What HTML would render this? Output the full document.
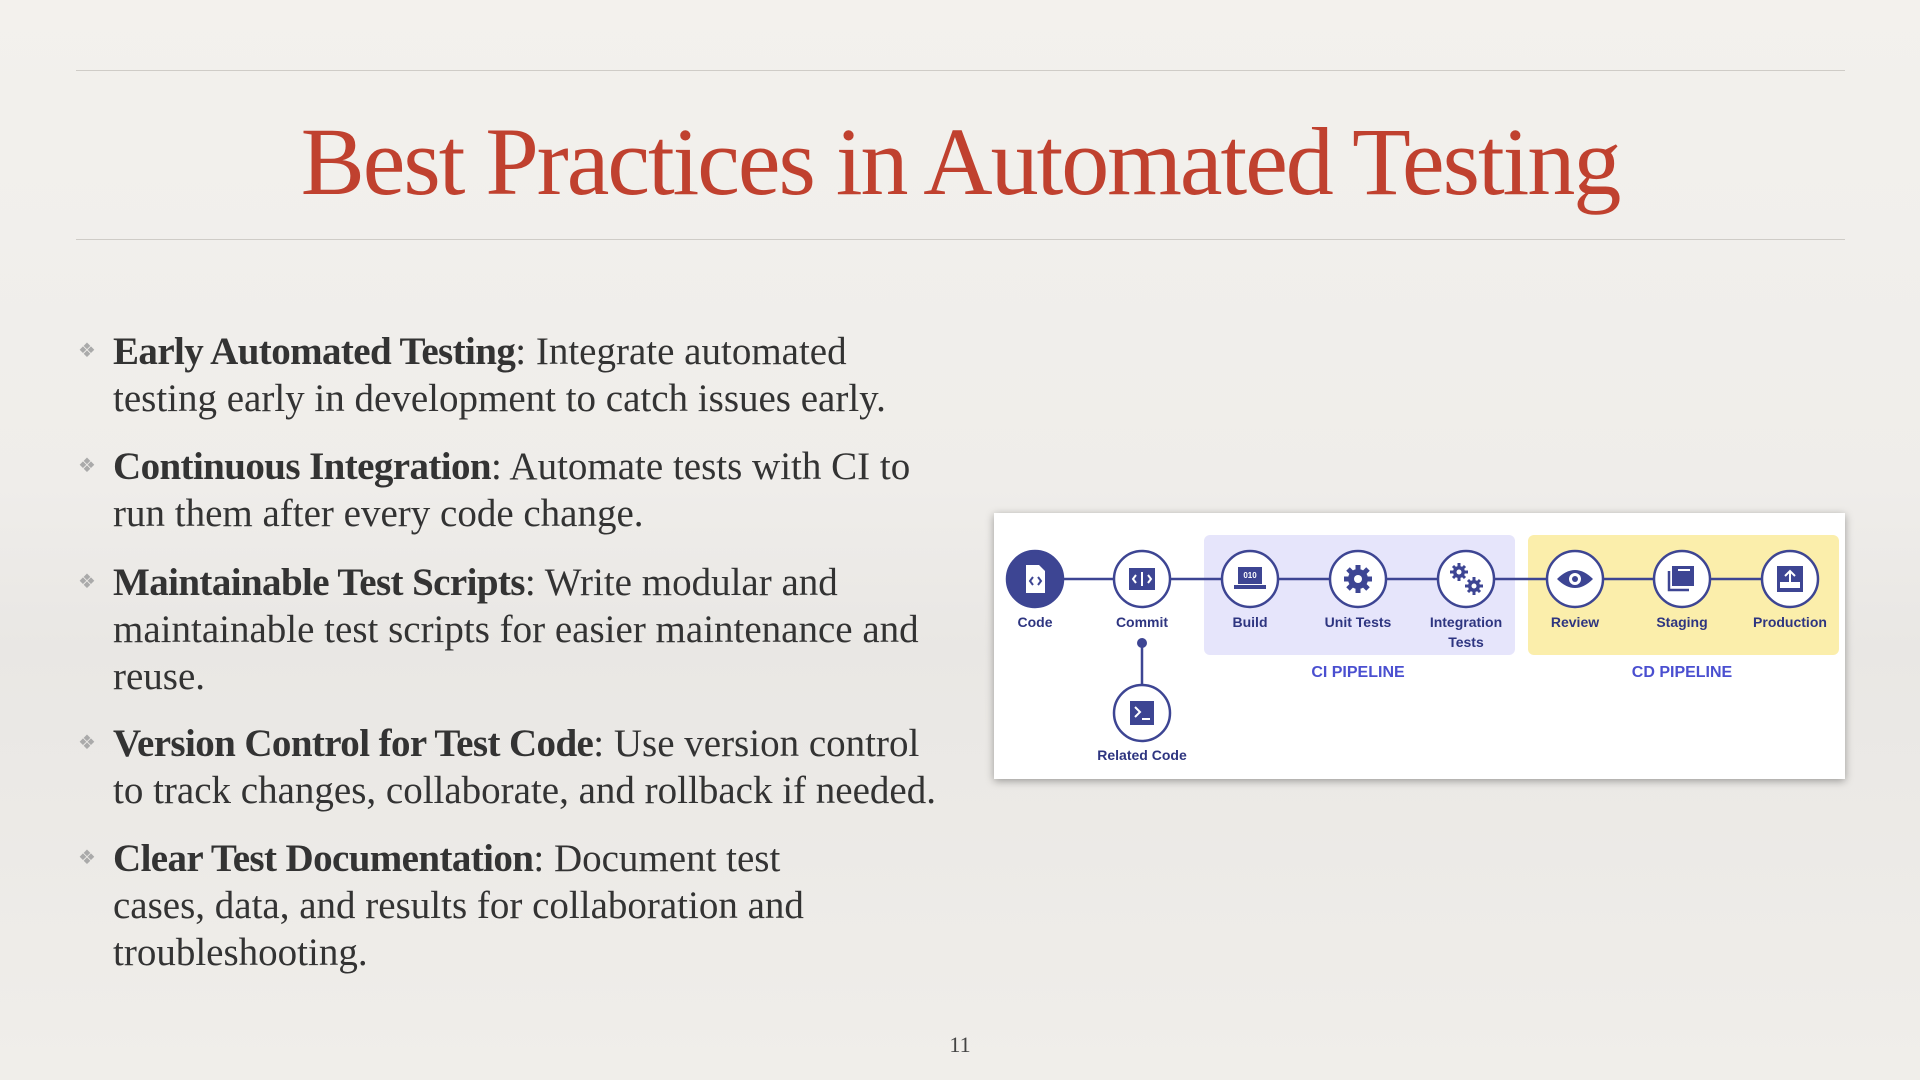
<!DOCTYPE html>
<html><head><meta charset="utf-8"><style>
html,body{margin:0;padding:0}
body{width:1920px;height:1080px;overflow:hidden;position:relative;background:linear-gradient(180deg,#f3f1ed 0%,#efedea 45%,#e9e7e4 60%,#f0eeea 100%);font-family:"Liberation Serif",serif;color:#333}
.hr{position:absolute;left:76px;width:1769px;height:1px;background:#cfccc7}
h1{position:absolute;left:0;width:1920px;top:102px;margin:0;text-align:center;font-weight:normal;font-size:96px;color:#c0412f;letter-spacing:-2px;line-height:120px}
.b{position:absolute;left:113px;width:900px;font-size:39px;line-height:47px;color:#333}
.b b{font-weight:bold;letter-spacing:-0.6px}
.b:before{content:"❖";position:absolute;left:-35px;top:0;font-size:20px;color:#aaa}
.pn{position:absolute;left:0;width:1920px;text-align:center;top:1032px;font-size:22px;color:#444}
.dg{position:absolute;left:994px;top:513px;width:851px;height:266px;background:#fff;box-shadow:0 2px 8px rgba(0,0,0,.35)}
</style></head><body>
<div class="hr" style="top:70px"></div>
<h1>Best Practices in Automated Testing</h1>
<div class="hr" style="top:239px"></div>

<div class="b" style="top:328px"><b>Early Automated Testing</b>: Integrate automated<br>testing early in development to catch issues early.</div>
<div class="b" style="top:443px"><b>Continuous Integration</b>: Automate tests with CI to<br>run them after every code change.</div>
<div class="b" style="top:559px"><b>Maintainable Test Scripts</b>: Write modular and<br>maintainable test scripts for easier maintenance and<br>reuse.</div>
<div class="b" style="top:720px"><b>Version Control for Test Code</b>: Use version control<br>to track changes, collaborate, and rollback if needed.</div>
<div class="b" style="top:835px"><b>Clear Test Documentation</b>: Document test<br>cases, data, and results for collaboration and<br>troubleshooting.</div>

<div class="dg">
<svg width="851" height="266" viewBox="994 513 851 266" xmlns="http://www.w3.org/2000/svg" font-family="Liberation Sans, sans-serif">
<rect x="1204" y="535" width="311" height="120" rx="6" fill="#e6e5fb"/>
<rect x="1528" y="535" width="311" height="120" rx="6" fill="#fbeeab"/>
<line x1="1035" y1="579" x2="1790" y2="579" stroke="#3d4593" stroke-width="2.5"/>
<line x1="1142" y1="643" x2="1142" y2="700" stroke="#3d4593" stroke-width="2.5"/>
<circle cx="1142" cy="643" r="5" fill="#3d4593"/>
<g fill="#fff" stroke="#3d4593" stroke-width="2.5">
<circle cx="1035" cy="579" r="28" fill="#3d4593"/>
<circle cx="1142" cy="579" r="28"/><circle cx="1250" cy="579" r="28"/><circle cx="1358" cy="579" r="28"/>
<circle cx="1466" cy="579" r="28"/><circle cx="1575" cy="579" r="28"/><circle cx="1682" cy="579" r="28"/>
<circle cx="1790" cy="579" r="28"/><circle cx="1142" cy="713" r="28"/>
</g>
<path d="M1026 565h13l6 6v22h-19z" fill="#fff"/>
<path d="M1033 577l-3 4 3 4M1038 577l3 4-3 4" stroke="#3d4593" stroke-width="2" fill="none"/>
<rect x="1129" y="568" width="26" height="22" fill="#3d4593"/>
<path d="M1136 575l-3 4 3 4M1148 575l3 4-3 4M1142 572v14" stroke="#fff" stroke-width="2" fill="none"/>
<rect x="1238" y="567" width="24" height="17" fill="#3d4593"/><rect x="1234" y="585" width="32" height="4" fill="#3d4593"/>
<text x="1250" y="578" font-size="8" fill="#fff" text-anchor="middle" font-weight="bold">010</text>
<g transform="translate(1358 579)" fill="#3d4593"><circle r="10"/><g stroke="#3d4593" stroke-width="5"><line x1="0" y1="-14" x2="0" y2="14"/><line x1="-14" y1="0" x2="14" y2="0"/><line x1="-10" y1="-10" x2="10" y2="10"/><line x1="-10" y1="10" x2="10" y2="-10"/></g><circle r="4" fill="#fff"/></g>
<g transform="translate(1459 572)" fill="#3d4593"><circle r="6"/><g stroke="#3d4593" stroke-width="3"><line y1="-9" y2="9"/><line x1="-9" x2="9"/><line x1="-6" y1="-6" x2="6" y2="6"/><line x1="-6" y1="6" x2="6" y2="-6"/></g><circle r="2.5" fill="#fff"/></g>
<g transform="translate(1474 586)" fill="#3d4593"><circle r="6"/><g stroke="#3d4593" stroke-width="3"><line y1="-9" y2="9"/><line x1="-9" x2="9"/><line x1="-6" y1="-6" x2="6" y2="6"/><line x1="-6" y1="6" x2="6" y2="-6"/></g><circle r="2.5" fill="#fff"/></g>
<path d="M1557 579q18-18 36 0q-18 18-36 0z" fill="#3d4593"/><circle cx="1575" cy="579" r="6" fill="#fff"/><circle cx="1575" cy="579" r="3" fill="#3d4593"/>
<rect x="1672" y="566" width="22" height="20" fill="#3d4593"/><path d="M1669 571v19h20" stroke="#3d4593" stroke-width="2.5" fill="none"/><rect x="1678" y="569" width="12" height="2" fill="#fff"/>
<rect x="1777" y="566" width="26" height="26" fill="#3d4593"/><rect x="1780" y="582" width="20" height="6" fill="#fff"/><path d="M1790 582v-10M1785 576l5-5 5 5" stroke="#fff" stroke-width="2" fill="none"/>
<rect x="1130" y="701" width="24" height="24" fill="#3d4593"/><path d="M1135 707l5 5-5 5M1142 719h8" stroke="#fff" stroke-width="2" fill="none"/>
<g font-size="14" fill="#2e3580" text-anchor="middle" font-weight="bold">
<text x="1035" y="627">Code</text><text x="1142" y="627">Commit</text><text x="1250" y="627">Build</text>
<text x="1358" y="627">Unit Tests</text><text x="1466" y="627">Integration</text><text x="1466" y="647">Tests</text>
<text x="1575" y="627">Review</text><text x="1682" y="627">Staging</text><text x="1790" y="627">Production</text>
<text x="1142" y="760">Related Code</text></g>
<g font-size="16" fill="#4a4fd0" text-anchor="middle" font-weight="bold"><text x="1358" y="677">CI PIPELINE</text><text x="1682" y="677">CD PIPELINE</text></g>
</svg>
</div>
<div class="pn">11</div>
</body></html>
